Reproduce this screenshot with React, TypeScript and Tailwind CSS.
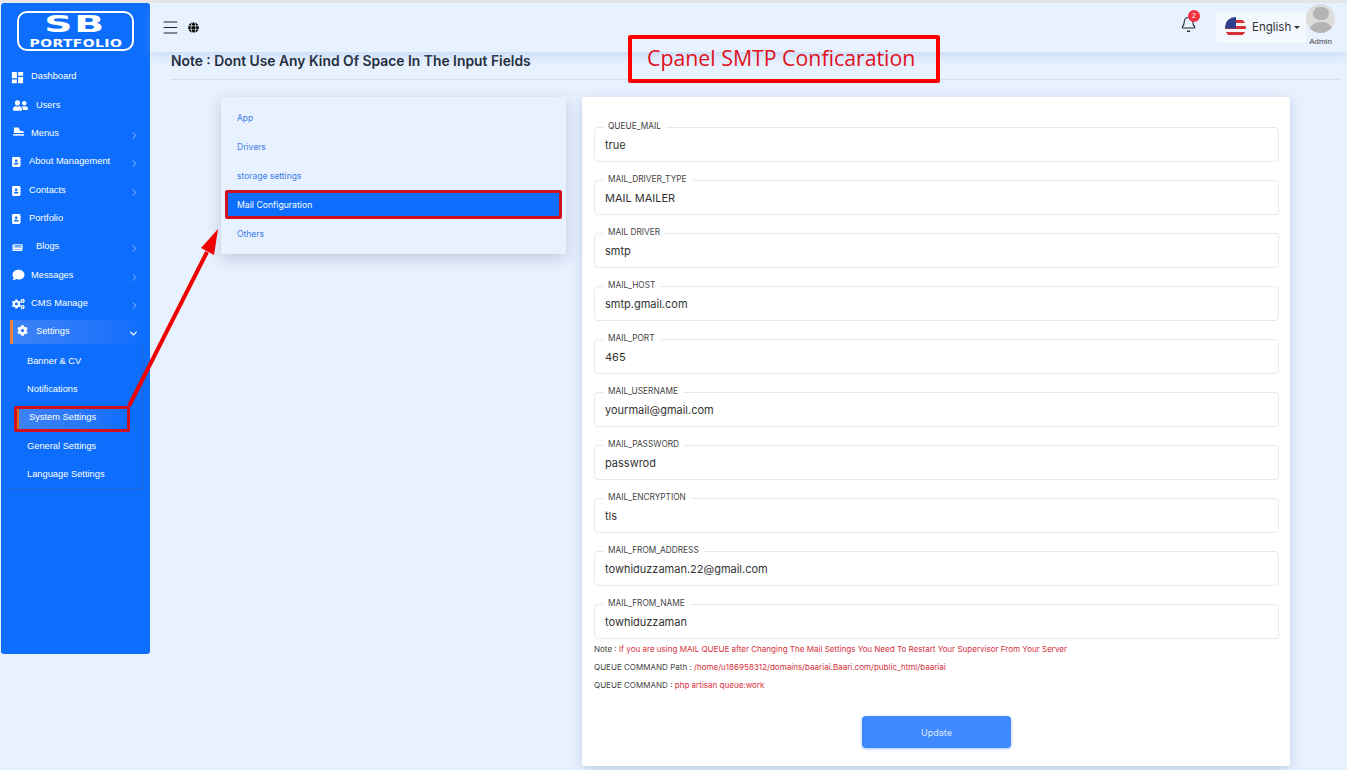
import React from 'react';
import { Bell, ChevronDown, ChevronRight, Menu } from 'lucide-react';
import { FaAddressBook, FaCog, FaCogs, FaComment, FaGlobe, FaNewspaper, FaUserFriends } from 'react-icons/fa';
import { MdDashboard } from 'react-icons/md';

const MenusIcon = ({ className }: { className?: string }) => (
  <svg viewBox="0 0 12 10" className={className} fill="currentColor">
    <path d="M1 0h5l2 4h3l1 2H1z" />
    <path d="M0 7.4h12V9H0z" />
  </svg>
);

type NavItem = {
  label: string;
  icon: React.ComponentType<{ className?: string }>;
  iconClass: string;
  textClass: string;
  arrow?: boolean;
};

const navItems: NavItem[] = [
  { label: 'Dashboard', icon: MdDashboard, iconClass: 'w-[15px] h-[15px] ml-[9px]', textClass: 'ml-[6px]' },
  { label: 'Users', icon: FaUserFriends, iconClass: 'w-[15px] h-[15px] ml-[12px]', textClass: 'ml-[8px]' },
  { label: 'Menus', icon: MenusIcon, iconClass: 'w-[11px] h-[10px] ml-[12px] -mt-1', textClass: 'ml-[7px]', arrow: true },
  { label: 'About Management', icon: FaAddressBook, iconClass: 'w-[9px] h-[10px] ml-[11px]', textClass: 'ml-[8px]', arrow: true },
  { label: 'Contacts', icon: FaAddressBook, iconClass: 'w-[9px] h-[10px] ml-[11px]', textClass: 'ml-[8px]', arrow: true },
  { label: 'Portfolio', icon: FaAddressBook, iconClass: 'w-[9px] h-[10px] ml-[11px]', textClass: 'ml-[8px]' },
  { label: 'Blogs', icon: FaNewspaper, iconClass: 'w-[11px] h-[9px] ml-[11px]', textClass: 'ml-[13px]', arrow: true },
  { label: 'Messages', icon: FaComment, iconClass: 'w-[13px] h-[12px] ml-[11px] -mt-[2px]', textClass: 'ml-[6px]', arrow: true },
  { label: 'CMS Manage', icon: FaCogs, iconClass: 'w-[13px] h-[12px] ml-[11px]', textClass: 'ml-[6px]', arrow: true },
];

const subItems = ['Banner & CV', 'Notifications', 'System Settings', 'General Settings', 'Language Settings'];
const tabs = ['App', 'Drivers', 'storage settings', 'Mail Configuration', 'Others'];

const fields = [
  { label: 'QUEUE_MAIL', value: 'true' },
  { label: 'MAIL_DRIVER_TYPE', value: 'MAIL MAILER' },
  { label: 'MAIL DRIVER', value: 'smtp' },
  { label: 'MAIL_HOST', value: 'smtp.gmail.com' },
  { label: 'MAIL_PORT', value: '465' },
  { label: 'MAIL_USERNAME', value: 'yourmail@gmail.com' },
  { label: 'MAIL_PASSWORD', value: 'passwrod' },
  { label: 'MAIL_ENCRYPTION', value: 'tls' },
  { label: 'MAIL_FROM_ADDRESS', value: 'towhiduzzaman.22@gmail.com' },
  { label: 'MAIL_FROM_NAME', value: 'towhiduzzaman' },
];

const Sidebar = () => (
  <aside className="ml-px w-[149px] h-[651px] shrink-0 rounded-[3px] bg-[#0d6efd] text-white font-['Liberation_Sans',sans-serif] text-[9.3px]">
    <div className="h-[59.4px] pt-[8px] flex justify-center">
      <div className="w-[117px] h-[40px] rounded-[10px] border-2 border-white flex flex-col items-center font-['DejaVu_Sans',sans-serif] font-bold leading-none">
        <span className="text-[23px] h-[23px] leading-[23px] tracking-[1px] scale-x-[1.7]">SB</span>
        <span className="text-[10.5px] h-[10px] leading-[10px] mt-[2px] tracking-[0.3px] scale-x-[1.33]">PORTFOLIO</span>
      </div>
    </div>
    {navItems.map(item => {
      const Icon = item.icon;
      return (
        <div key={item.label} className="h-[28.4px] pt-[1px] flex items-center">
          <Icon className={`${item.iconClass} shrink-0`} />
          <span className={item.textClass}>{item.label}</span>
          {item.arrow && <ChevronRight className="w-[11px] h-[11px] ml-auto mr-[10px] mt-[3px] text-white/60" />}
        </div>
      );
    })}
    <div className="mt-[2px] ml-[9px] mr-[9px] h-[24px] pt-[1px] flex items-center border-l-[3px] border-[#e8833a] bg-gradient-to-r from-[#3d82f5] to-[#0d6efd]">
      <FaCog className="w-[11px] h-[11px] ml-[4px] -mt-1" />
      <span className="ml-[8px]">Settings</span>
      <ChevronDown className="w-[11px] h-[11px] ml-auto mr-[2px] mt-[2px]" strokeWidth={3} />
    </div>
    <div className="ml-[7px] mr-[7px] h-[146px] pt-[3px] border-r border-b border-[#2f62c9]">
      {subItems.map(label =>
        label === 'System Settings' ? (
          <div key={label} className="relative h-[28.4px] flex items-center">
            <div className="ml-[8px] w-[112px] h-[23px] pt-[1px] flex items-center border-l-[3px] border-[#e8651a] bg-gradient-to-r from-[#3d82f5] to-[#0d6efd]">
              <span className="ml-[10px]">{label}</span>
            </div>
            <div className="absolute left-[6px] top-[2px] w-[116px] h-[26px] border-[3px] border-[#d3101f] rounded-[2px]" />
          </div>
        ) : (
          <div key={label} className="h-[28.4px] pt-[1px] flex items-center pl-[19px]">
            {label}
          </div>
        ),
      )}
    </div>
  </aside>
);

const Header = () => (
  <header className="h-[49px] shrink-0 flex items-center bg-[#e8f1fe] shadow-[0_4px_10px_rgba(130,170,235,0.3)] relative">
    <Menu className="w-[19px] h-[19px] ml-[11px] text-[#222]" strokeWidth={1.3} />
    <FaGlobe className="w-[11px] h-[11px] ml-[8px] text-black" />
    <div className="relative ml-auto mr-[19px] -mt-[6px]">
      <Bell className="w-[17px] h-[17px] text-[#222]" strokeWidth={1.5} />
      <span className="absolute -top-[6px] left-[8px] w-[12px] h-[12px] rounded-full bg-[#ef3340] text-white text-[7px] leading-[12px] text-center font-['Liberation_Sans',sans-serif]">
        2
      </span>
    </div>
    <div className="w-[90px] h-[31px] rounded bg-[#f3f8fe] flex items-center pl-[9px] font-['Inter',sans-serif] text-[11.5px] text-[#333]">
      <svg viewBox="0 0 21 21" className="w-[21px] h-[21px] shrink-0">
        <clipPath id="flag">
          <circle cx="10.5" cy="10.5" r="10.5" />
        </clipPath>
        <g clipPath="url(#flag)">
          <rect width="21" height="21" fill="#f4f4f4" />
          <rect y="3" width="21" height="3" fill="#d8303a" />
          <rect y="9" width="21" height="3" fill="#d8303a" />
          <rect y="15" width="21" height="3" fill="#d8303a" />
          <rect width="11" height="11.5" fill="#2f3f8f" />
        </g>
      </svg>
      <span className="ml-[6px]">English</span>
      <span className="ml-[3px] w-0 h-0 border-x-[3px] border-x-transparent border-t-[3px] border-t-[#333]" />
    </div>
    <div className="w-[29px] mr-[12px] -mt-[6px] flex flex-col items-center">
      <div className="w-[29px] h-[29px] rounded-full bg-[#dcdcdc] overflow-hidden flex flex-col items-center">
        <span className="mt-[3px] w-[16px] h-[16px] rounded-full bg-[#b4b4b4]" />
        <span className="mt-[2px] w-[24px] h-[12px] rounded-t-full bg-[#b4b4b4]" />
      </div>
      <span className="mt-[4px] text-[8px] leading-[9px] text-[#444] font-['Liberation_Sans',sans-serif]">Admin</span>
    </div>
  </header>
);

const Field = ({ label, value }: { label: string; value: string }) => (
  <div className="relative h-[35px] mb-[18px] rounded border border-[#e6e9ee] bg-white flex items-center pl-[10px] pt-[0.5px] text-[11px] text-[#333]">
    {value}
    <span className="absolute left-[8px] -top-[7px] px-[5px] bg-white text-[8.3px] leading-[11px] text-[#444]">{label}</span>
  </div>
);

export default function App() {
  return (
    <div className="relative w-[1347px] h-[770px] overflow-hidden bg-[#e8f1fe] font-['Inter',sans-serif]">
      <div className="h-[3px] bg-[#e8e8e8]" />
      <div className="flex">
        <Sidebar />
        <main className="flex-1 min-w-0 flex flex-col h-[767px]">
          <Header />
          <div className="ml-[21px] mr-[7px] h-[28px] border-b border-[#d3deee] pb-[8px] flex items-center text-[13.85px] font-semibold text-[#222a35]">
            Note : Dont Use Any Kind Of Space In The Input Fields
          </div>
          <div className="flex items-start pl-[71px] pt-[17px]">
            <div className="w-[345px] h-[157px] pt-[6px] px-[5px] bg-[#e8f1fe] shadow-[0_4px_14px_rgba(90,110,150,0.3)]">
              {tabs.map(tab =>
                tab === 'Mail Configuration' ? (
                  <div key={tab} className="h-[29px] flex items-center pl-[9px] pt-[2px] -mx-[1px] bg-[#0d6efd] border-[3px] border-[#d3101f] rounded-[2px] text-[8.7px] text-white">
                    {tab}
                  </div>
                ) : (
                  <div key={tab} className="h-[29px] flex items-center pl-[11px] pt-[2px] text-[8.5px] text-[#3f80e8]">
                    {tab}
                  </div>
                ),
              )}
            </div>
            <div className="ml-[16px] w-[708px] h-[669px] pt-[30px] pl-[12px] pr-[11px] rounded-[3px] bg-white shadow-[0_3px_12px_rgba(110,140,190,0.35)]">
              {fields.map(field => (
                <Field key={field.label} {...field} />
              ))}
              <div className="-mt-[17px] text-[8.04px] leading-[18px] text-[#444]">
                <p>
                  Note : <span className="text-[#d6303c]">If you are using MAIL QUEUE after Changing The Mail Settings You Need To Restart Your Supervisor From Your Server</span>
                </p>
                <p>
                  QUEUE COMMAND Path : <span className="text-[#d6303c]">/home/u186958312/domains/baariai.Baari.com/public_html/baariai</span>
                </p>
                <p>
                  QUEUE COMMAND : <span className="text-[#d6303c]">php artisan queue:work</span>
                </p>
              </div>
              <div className="flex justify-center mt-[22px]">
                <button className="w-[149px] h-[32px] pt-[1px] rounded bg-[#4088fd] shadow-[0_1px_3px_rgba(64,136,253,0.5)] text-[9px] text-[#dce9ff]">Update</button>
              </div>
            </div>
          </div>
        </main>
      </div>

      {/* annotations drawn over the page */}
      <div className="absolute left-[628px] top-[35px] w-[312px] h-[48px] border-[4px] border-[#ff0000] rounded-[2px] flex items-center pl-[15px] pb-[2px] font-['Open_Sans',sans-serif] text-[21.3px] text-[#e0101c]">
        Cpanel SMTP Conficaration
      </div>
      <svg className="absolute left-0 top-0 pointer-events-none" width="1347" height="770" viewBox="0 0 1347 770">
        <path d="M129 406 L207 252" stroke="#f00000" strokeWidth="4" fill="none" />
        <path d="M218 229 L201 248 L214 255 Z" fill="#f00000" />
      </svg>
    </div>
  );
}
